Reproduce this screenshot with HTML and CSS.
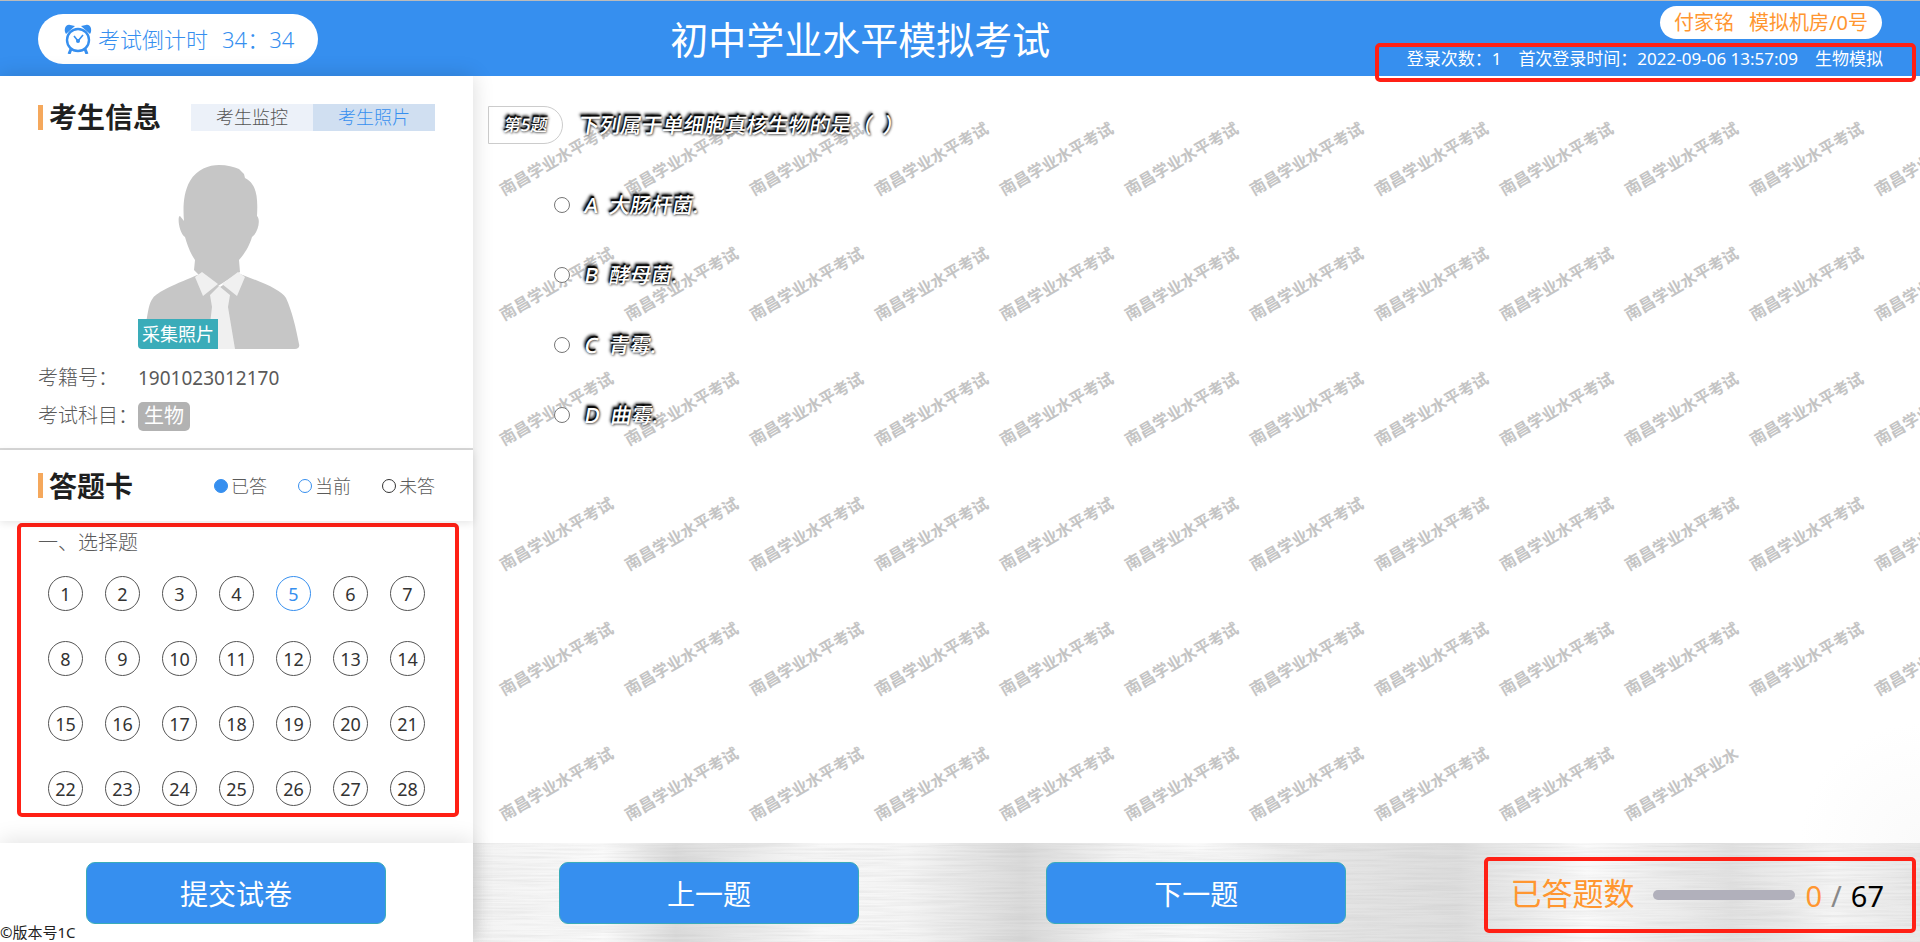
FILE: index.html
```html
<!DOCTYPE html>
<html lang="zh-CN">
<head>
  <meta charset="UTF-8" />
  <meta name="viewport" content="width=device-width, initial-scale=1.0" />
  <title>初中学业水平模拟考试</title>
  <link rel="stylesheet" href="styles.css">
</head>
<body>
  <header class="header">
    <div class="timer">
      <svg class="clock" viewBox="0 0 28 30" fill="none" stroke="#368fef">
        <path d="M1 8C0 3 3 0 6 1c2 0 3 1 5 1L2 10zM27 8c1-5-2-8-5-7-2 0-3 1-5 1l9 8z" fill="#368fef" stroke="none"/>
        <circle cx="14" cy="16" r="11" stroke-width="2.400" fill="#fff"/>
        <path d="M10 12l4 5 5-6" stroke-width="1.600"/>
        <circle cx="14" cy="17" r="2" fill="#368fef" stroke="none"/>
        <path d="M7 25l-2 5M21 25l2 5" stroke-width="3"/>
      </svg>
      <span>考试倒计时</span>
      <span class="timer-value">34：34</span>
    </div>
    <h1 class="title">初中学业水平模拟考试</h1>
    <div class="user">
      <div class="user-name"><span>付家铭</span><span>模拟机房/0号</span></div>
      <div class="login frame">
        <span>登录次数：1</span><span>首次登录时间：2022-09-06 13:57:09</span><span>生物模拟</span>
      </div>
    </div>
  </header>

  <div class="page">
    <aside class="sidebar">
      <section class="info">
        <div class="section-head">
          <h2>考生信息</h2>
          <div class="tabs">
            <button class="tab">考生监控</button>
            <button class="tab active">考生照片</button>
          </div>
        </div>
        <div class="photo">
          <svg class="avatar" viewBox="0 0 164 184">
            <path d="M46 56C45 44 45 28 52 16 59 4 71 0 81 0c8 0 15 2 20 4l5 5 1 4c12 6 13 20 12 38 4 4 1 17-5 21-3 10-7 16-13 23l1 12-22 14-15-7-9-9 1-10C52 88 49 79 47 72c-6-4-8-21-5-21z" fill="#c6c6c6"/>
            <path d="M8 159C10 146 11 138 15 133 19 127 37 119 62 109l20 13 20-13c24 9 41 16 46 24 6 13 10 30 13 46 1 3-1 5-4 5H7z" fill="#c6c6c6"/>
            <path d="M64 107L80 119 65 131 57 112zM100 107L84 119l15 12 8-19zM72 130l9-9 11 9-2 12 7 42H69l5-42z" fill="#f0f0f0"/>
          </svg>
          <span class="photo-badge">采集照片</span>
        </div>
        <dl class="details">
          <dt>考籍号：</dt><dd class="number">1901023012170</dd>
          <dt>考试科目：</dt><dd><span class="tag">生物</span></dd>
        </dl>
      </section>

      <section class="card-head section-head">
        <h2>答题卡</h2>
        <ul class="legend">
          <li><i class="dot done"></i>已答</li>
          <li><i class="dot current"></i>当前</li>
          <li><i class="dot"></i>未答</li>
        </ul>
      </section>

      <section class="card">
        <div class="frame frame-card">
          <h3>一、选择题</h3>
          <div class="numbers" id="numbers"></div>
        </div>
      </section>

      <div class="submit">
        <button class="btn">提交试卷</button>
        <small class="version">©版本号1C</small>
      </div>
    </aside>

    <main class="main">
      <section class="question">
        <div class="watermark" id="watermark" aria-hidden="true"></div>
        <div class="question-head">
          <span class="question-no"><b>第5题</b></span>
          <p class="shadow-text">下列属于单细胞真核生物的是（&nbsp; ）</p>
        </div>
        <form class="options">
          <label><input type="radio" name="answer"><span class="shadow-text">A&nbsp; 大肠杆菌.</span></label>
          <label><input type="radio" name="answer"><span class="shadow-text">B&nbsp; 酵母菌.</span></label>
          <label><input type="radio" name="answer"><span class="shadow-text">C&nbsp; 青霉.</span></label>
          <label><input type="radio" name="answer"><span class="shadow-text">D&nbsp; 曲霉.</span></label>
        </form>
      </section>

      <footer class="footer">
        <svg class="metal" width="100%" height="100%">
          <filter id="brushed" x="0" y="0" width="100%" height="100%">
            <feTurbulence type="fractalNoise" baseFrequency="0.012 0.5" numOctaves="3" seed="4"/>
            <feColorMatrix values="0 0 0 0 0.4  0 0 0 0 0.4  0 0 0 0 0.4  0.36 0 0 0 -0.13"/>
          </filter>
          <rect width="100%" height="100%" filter="url(#brushed)"/>
        </svg>
        <button class="btn">上一题</button>
        <button class="btn">下一题</button>
        <div class="progress frame">
          <span class="progress-label">已答题数</span>
          <div class="progress-bar"></div>
          <span class="progress-count"><b>0</b><i>/</i>67</span>
        </div>
      </footer>
    </main>
  </div>

  <script>
    const numbers = document.getElementById('numbers');
    const watermark = document.getElementById('watermark');

    for (let i = 1; i <= 28; i++) {
      const btn = document.createElement('button');
      btn.textContent = i;
      btn.className = i === 5 ? 'number-btn current' : 'number-btn';
      numbers.appendChild(btn);
    }

    // 12 per row, the last row stops after the tenth
    for (let i = 0; i < 70; i++) {
      const mark = document.createElement('span');
      mark.textContent = i === 69 ? '南昌学业水平业水' : '南昌学业水平考试';
      watermark.appendChild(mark);
    }
  </script>
</body>
</html>
```
FILE: styles.css
```css
* {
  box-sizing: border-box;
}

body {
  margin: 0;
  height: 100vh;
  display: flex;
  flex-direction: column;
  overflow: hidden;
  font-family: 'Noto Sans', 'Noto Sans CJK SC', sans-serif;
  color: #5a5a5a;
  background: #fff;
}

h1, h2, h3, p, ul, dl, dd {
  margin: 0;
  padding: 0;
}

button {
  font-family: inherit;
  padding: 0;
  cursor: pointer;
}

/* red outline round the key areas */
.frame {
  border: 4px solid #ff2015;
  border-radius: 5px;
}

.header {
  height: 76px;
  flex: none;
  display: flex;
  justify-content: space-between;
  padding: 0 4px 0 38px;
  border-top: 1px solid #bbb;
  background: #368fef;
  color: #fff;
}

.timer {
  display: flex;
  align-items: center;
  height: 50px;
  width: 280px;
  margin-top: 13px;
  padding-left: 26px;
  border-radius: 25px;
  background: #fff;
  color: #368fef;
  font-size: 22px;
  line-height: 46px;
  font-weight: 300;
}

.clock {
  width: 28px;
  height: 30px;
  margin-right: 6px;
}

.timer-value {
  margin-left: 14px;
}

.title {
  padding-left: 28px;
  font-size: 38px;
  font-weight: 400;
  line-height: 77px;
}

.user {
  display: flex;
  flex-direction: column;
  align-items: flex-end;
  padding-top: 5px;
}

.user-name {
  display: flex;
  gap: 15px;
  height: 33px;
  margin-right: 34px;
  padding: 0 14px;
  border-radius: 17px;
  background: #fff;
  color: #ff9630;
  font-size: 20px;
  line-height: 33px;
}

.login {
  display: flex;
  gap: 17px;
  height: 39px;
  flex: none;
  margin-top: 4px;
  padding: 0 29px 0 28px;
  font-size: 17px;
  line-height: 24px;
  position: relative;
  z-index: 2;
}

.page {
  flex: 1;
  display: flex;
  min-height: 0;
}

.sidebar {
  width: 473px;
  flex: none;
  display: flex;
  flex-direction: column;
  background: #fff;
  box-shadow: 0 0 20px rgba(0, 0, 0, 0.15);
  position: relative;
  z-index: 1;
}

.info {
  height: 374px;
  padding-top: 27px;
  border-bottom: 2px solid #d8d8d8;
}

.section-head {
  display: flex;
  align-items: center;
  justify-content: space-between;
  padding-left: 38px;
  padding-right: 38px;
}

.section-head h2 {
  display: flex;
  align-items: center;
  gap: 6px;
  font-size: 28px;
  line-height: 28px;
  font-weight: 700;
  color: #1f1f1f;
}

.section-head h2::before {
  content: '';
  width: 5px;
  height: 25px;
  background: #f5a85c;
}

.tabs {
  display: flex;
}

.tab {
  width: 122px;
  height: 27px;
  border: 0;
  background: #ecf1f9;
  color: #555;
  font-size: 18px;
  font-weight: 300;
  line-height: 25px;
}

.tab.active {
  background: #d0dff1;
  color: #368fef;
}

.photo {
  position: relative;
  width: 164px;
  height: 184px;
  margin: 34px 0 0 138px;
}

.avatar {
  display: block;
  width: 164px;
  height: 184px;
}

.photo-badge {
  position: absolute;
  left: 0;
  bottom: 0;
  height: 30px;
  padding: 0 4px;
  border-radius: 0 0 0 4px;
  background: #3aacb9;
  color: #fff;
  font-size: 18px;
  line-height: 30px;
}

.details {
  display: grid;
  grid-template-columns: 100px 1fr;
  grid-auto-rows: 38px;
  padding: 10px 0 0 38px;
  font-size: 20px;
  font-weight: 300;
  line-height: 38px;
  white-space: nowrap;
}

.details .number {
  font-size: 19px;
  font-weight: 400;
}

.tag {
  display: inline-block;
  height: 29px;
  padding: 0 6px;
  border-radius: 5px;
  background: #b2b2b2;
  color: #fff;
  font-weight: 400;
  line-height: 28px;
}

.card-head {
  height: 71px;
  flex: none;
  box-shadow: 0 2px 8px rgba(0, 0, 0, 0.1);
  position: relative;
}

.legend {
  display: flex;
  gap: 31px;
  list-style: none;
  font-size: 18px;
  font-weight: 300;
  line-height: 24px;
}

.legend li {
  display: flex;
  align-items: center;
  gap: 3px;
}

.dot {
  width: 14px;
  height: 14px;
  border: 1px solid #333;
  border-radius: 50%;
}

.dot.done {
  background: #368fef;
  border-color: #368fef;
}

.dot.current {
  border-color: #368fef;
}

.card {
  flex: 1;
  padding: 2px 14px 0 17px;
}

.frame-card {
  height: 294px;
  padding-left: 17px;
}

.card h3 {
  font-size: 20px;
  line-height: 32px;
  font-weight: 300;
}

.numbers {
  display: grid;
  grid-template-columns: repeat(7, 35px);
  gap: 30px 22px;
  padding: 17px 0 0 10px;
}

.number-btn {
  width: 35px;
  height: 35px;
  border: 1px solid #555;
  border-radius: 50%;
  background: #fff;
  color: #333;
  font-size: 18px;
  line-height: 30px;
}

.number-btn.current {
  border-color: #368fef;
  color: #368fef;
}

.submit {
  position: relative;
  height: 99px;
  flex: none;
  padding: 19px 0 0 86px;
  background: #fff;
  box-shadow: 0 -4px 20px rgba(0, 0, 0, 0.1);
}

.btn {
  width: 300px;
  height: 62px;
  flex: none;
  border: 1px solid #3aacb9;
  border-radius: 9px;
  background: #368fef;
  color: #fff;
  font-size: 28px;
  font-weight: 400;
}

.version {
  position: absolute;
  left: 0;
  bottom: 0;
  color: #222;
  font-size: 15px;
  line-height: 20px;
}

.main {
  flex: 1;
  min-width: 0;
  display: flex;
  flex-direction: column;
}

.question {
  position: relative;
  flex: 1;
  overflow: hidden;
  padding: 30px 15px;
  background: radial-gradient(circle at bottom right, #fafafa, #fff 120px);
}

.watermark {
  position: absolute;
  top: 19px;
  left: 20px;
  display: grid;
  grid-template-columns: repeat(12, 125px);
  grid-auto-rows: 125px;
  place-items: center;
  color: #c4c4c4;
  font-size: 16px;
  font-weight: 700;
  white-space: nowrap;
}

.watermark span {
  transform: rotate(-30deg);
}

.question-head {
  position: relative;
  display: flex;
  gap: 16px;
}

.question-no {
  height: 38px;
  width: 75px;
  border: 1px solid #ccc;
  border-radius: 0 19px 19px 0;
  text-align: center;
  line-height: 36px;
}

/* white slanted letters that show only by their dark shadow */
.question-no b,
.shadow-text {
  display: inline-block;
  color: #fff;
  font-weight: 500;
  text-shadow: -1px -2px 1px #000, -2px -3px 3px #000, 0 0 3px #333, 1px 1px 2px #999;
  transform: skewX(-10deg);
}

.question-no b {
  font-size: 17px;
}

.shadow-text {
  font-size: 21px;
  line-height: 38px;
}

.options {
  position: relative;
  display: flex;
  flex-direction: column;
  gap: 32px;
  padding: 42px 0 0 66px;
}

.options label {
  display: flex;
  align-items: center;
  gap: 15px;
}

.options input {
  width: 16px;
  height: 16px;
  margin: 0;
}

.footer {
  position: relative;
  height: 99px;
  flex: none;
  display: flex;
  justify-content: space-between;
  padding: 0 4px 0 86px;
  background: linear-gradient(90deg, #f3f3f3, #fafafa 9%, #dcdcdc 14%, #f8f8f8 24%, #f5f5f5 30%, #dadada 38%, #f4f4f4 45%, #fafafa 50%, #e6e6e6 58%, #dedede 68%, #fafafa 77%, #e2e2e2 87%, #f4f4f4 94%, #e8e8e8);
}

.metal {
  position: absolute;
  inset: 0;
}

.footer .btn {
  position: relative;
  margin-top: 19px;
}

.footer .btn + .btn {
  margin-left: 49px;
}

.progress {
  position: relative;
  display: flex;
  align-items: center;
  height: 76px;
  margin-top: 14px;
  padding: 0 28px 0 22px;
  white-space: nowrap;
}

.progress-label {
  color: #ff9630;
  font-size: 31px;
  line-height: 68px;
  height: 72px;
}

.progress-bar {
  width: 142px;
  height: 10px;
  margin: 0 10px 0 19px;
  border-radius: 5px;
  background: #b1b0bb;
}

.progress-count {
  display: flex;
  gap: 9px;
  color: #000;
  font-size: 29px;
}

.progress-count b {
  color: #ff9630;
  font-weight: 400;
}

.progress-count i {
  color: #888;
  font-style: normal;
}
```
